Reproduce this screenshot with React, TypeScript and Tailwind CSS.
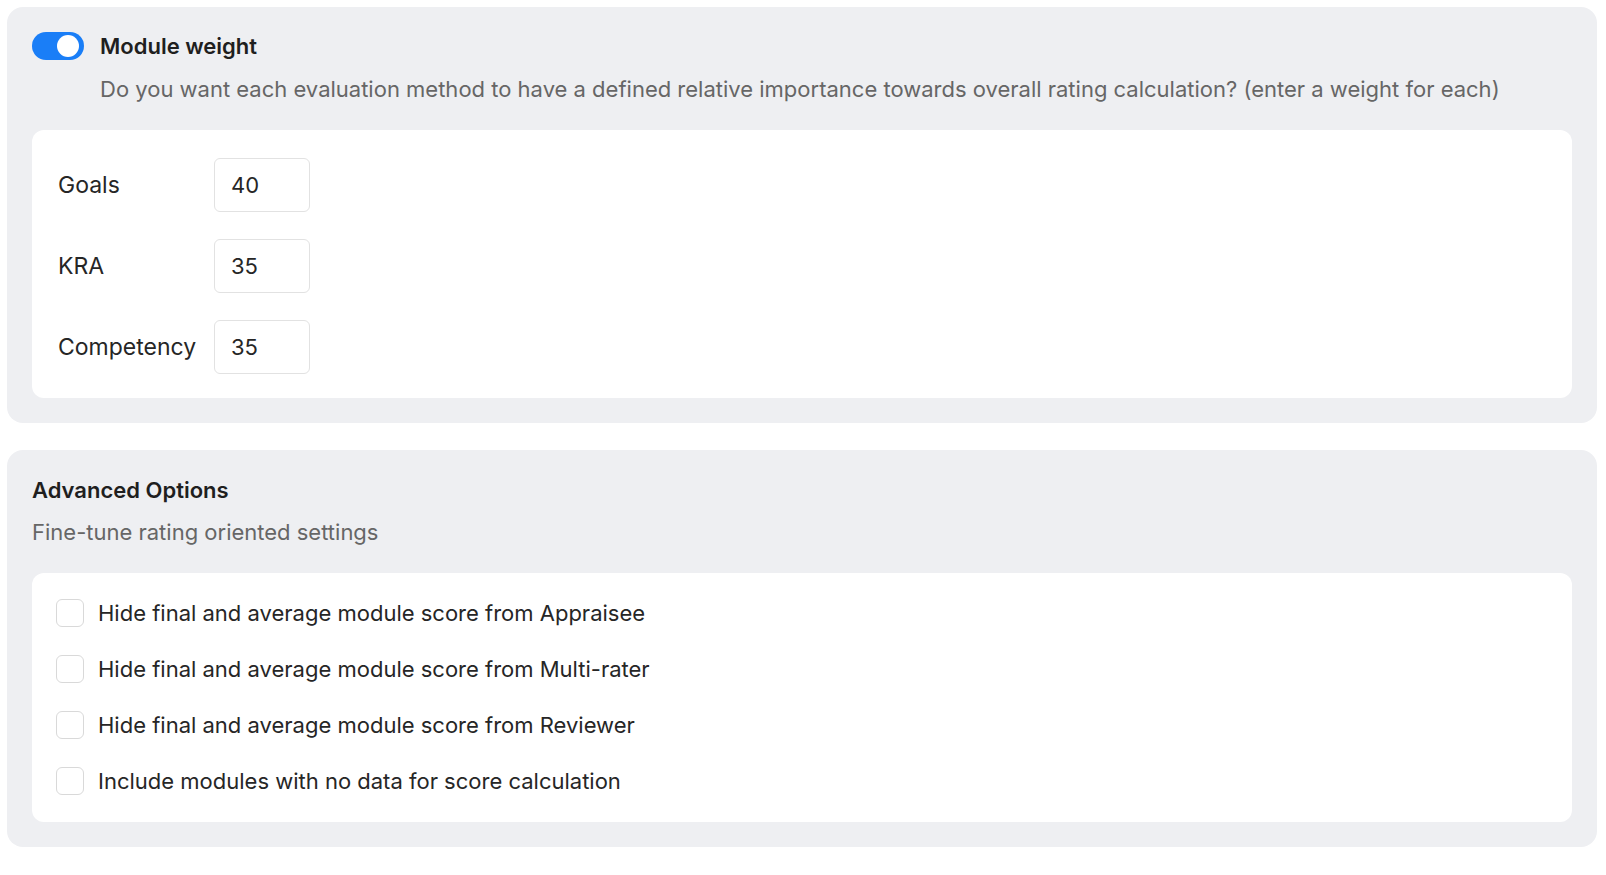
import React from "react";

const rows = [
  { label: "Goals", value: "40" },
  { label: "KRA", value: "35" },
  { label: "Competency", value: "35" },
];

const options = [
  "Hide final and average module score from Appraisee",
  "Hide final and average module score from Multi-rater",
  "Hide final and average module score from Reviewer",
  "Include modules with no data for score calculation",
];

export default function App() {
  return (
    <div
      className="min-h-screen bg-white pl-[7px] pt-[7px] pb-[27px]"
      style={{ fontFamily: "Inter, 'Noto Sans', sans-serif" }}
    >
      <section className="w-[1590px] rounded-[16px] bg-[#eeeff2] px-[25px] pt-[25px] pb-[25px]">
        <div className="flex items-center gap-[16px]">
          <div className="flex h-[28px] w-[52px] items-center justify-end rounded-full bg-[#1a7ef7] pr-[5px]">
            <div className="h-[22px] w-[22px] rounded-full bg-white" />
          </div>
          <h2 className="text-[22px] font-semibold leading-[28px] text-[#1f1f1f]">Module weight</h2>
        </div>
        <p className="ml-[68px] mt-[15px] text-[22px] leading-[28px] text-[#666666]">
          Do you want each evaluation method to have a defined relative importance towards overall rating calculation? (enter a weight for each)
        </p>
        <div className="mt-[27px] flex flex-col gap-[27px] rounded-[12px] bg-white px-[26px] pt-[28px] pb-[24px]">
          {rows.map((r) => (
            <div key={r.label} className="flex items-center">
              <span className="w-[156px] text-[23px] text-[#262626]">{r.label}</span>
              <div className="flex h-[54px] w-[96px] items-center rounded-[6px] border border-[#e2e2e2] bg-white pl-[16px] text-[22px] text-[#262626]">
                {r.value}
              </div>
            </div>
          ))}
        </div>
      </section>

      <section className="mt-[27px] w-[1590px] rounded-[16px] bg-[#eeeff2] px-[25px] pt-[26px] pb-[25px]">
        <h2 className="text-[22px] font-semibold leading-[28px] text-[#1f1f1f]">Advanced Options</h2>
        <p className="mt-[14px] text-[22px] leading-[28px] text-[#666666]">Fine-tune rating oriented settings</p>
        <div className="mt-[27px] flex flex-col gap-[28px] rounded-[12px] bg-white pl-[24px] pr-[24px] pt-[26px] pb-[27px]">
          {options.map((o) => (
            <label key={o} className="flex h-[28px] items-center gap-[14px]">
              <span className="h-[28px] w-[28px] shrink-0 rounded-[6px] border-[1.5px] border-[#d9d9d9] bg-white" />
              <span className="text-[22px] leading-[28px] text-[#262626]">{o}</span>
            </label>
          ))}
        </div>
      </section>
    </div>
  );
}
